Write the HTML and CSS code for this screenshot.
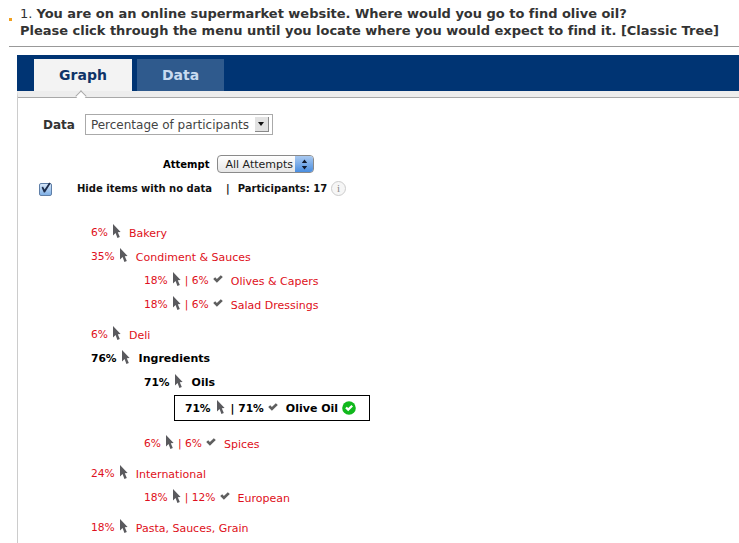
FILE: index.html
```html
<!DOCTYPE html>
<html>

<head>
    <title>Question results</title>
    <meta charset="UTF-8">
    <link rel="stylesheet" href="styles.css">
</head>

<body>
    <svg class="defs" width="0" height="0">
        <symbol id="cursor" viewBox="0 0 9 14">
            <path d="M1 0 L8.6 8 L5.8 8.2 L7.8 13 L5.4 14 L3.6 9 L1 11.4 Z" fill="#5a5a5e" />
        </symbol>
        <symbol id="tick" viewBox="0 0 10 8">
            <path d="M0.2 4 L2.2 2.2 L3.9 3.9 L7.8 0.2 L9.8 2 L3.9 7.8 Z" fill="#5f5f5f" />
        </symbol>
    </svg>

    <div class="question">
        <span class="marker"></span>
        <p>1. <b>You are on an online supermarket website. Where would you go to find olive oil?</b></p>
        <p><b>Please click through the menu until you locate where you would expect to find it. [Classic Tree]</b></p>
    </div>

    <div class="tabs">
        <div class="tab active">Graph</div>
        <div class="tab">Data</div>
    </div>

    <div class="panel">
        <span class="notch"></span>
        <div class="data-row">
            <label>Data</label>
            <div class="select">
                <span>Percentage of participants</span>
                <span class="select-arrow"></span>
            </div>
        </div>

        <div class="attempt-row">
            <label>Attempt</label>
            <div class="mac-select">
                <span>All Attempts</span>
                <span class="mac-arrows">
                    <svg width="7" height="11" viewBox="0 0 7 11">
                        <path d="M3.5 0.5 L6.2 4 L0.8 4 Z M3.5 10.5 L6.2 7 L0.8 7 Z" fill="#10192c" />
                    </svg>
                </span>
            </div>
        </div>

        <div class="filter-row">
            <span class="checkbox">
                <svg width="13" height="13" viewBox="0 0 13 13">
                    <path d="M2.6 5.6 L4 4.6 L5.6 7.4 L10.2 0.6 L11.6 1.4 L6 10.6 L4.8 10.6 Z" fill="#1d2c4a" />
                </svg>
            </span>
            <span class="hide-label">Hide items with no data</span>
            <span class="sep">|</span>
            <span>Participants: 17</span>
            <span class="info">i</span>
        </div>

        <ul class="tree">
            <li class="item lvl1 group"><span class="pct">6%</span><svg class="cur"><use href="#cursor" /></svg><span class="name">Bakery</span></li>
            <li class="item lvl1 group"><span class="pct">35%</span><svg class="cur"><use href="#cursor" /></svg><span class="name">Condiment &amp; Sauces</span></li>
            <li class="item lvl2"><span class="pct">18%</span><svg class="cur"><use href="#cursor" /></svg><span class="pct pipe">| 6%</span><svg class="tick"><use href="#tick" /></svg><span class="name">Olives &amp; Capers</span></li>
            <li class="item lvl2"><span class="pct">18%</span><svg class="cur"><use href="#cursor" /></svg><span class="pct pipe">| 6%</span><svg class="tick"><use href="#tick" /></svg><span class="name">Salad Dressings</span></li>
            <li class="item lvl1 group-gap"><span class="pct">6%</span><svg class="cur"><use href="#cursor" /></svg><span class="name">Deli</span></li>
            <li class="item lvl1 path"><span class="pct">76%</span><svg class="cur"><use href="#cursor" /></svg><span class="name">Ingredients</span></li>
            <li class="item lvl2 path"><span class="pct">71%</span><svg class="cur"><use href="#cursor" /></svg><span class="name">Oils</span></li>
            <li class="item correct path">
                <span class="pct">71%</span><svg class="cur"><use href="#cursor" /></svg><span class="pct pipe">| 71%</span><svg class="tick"><use href="#tick" /></svg><span class="name">Olive Oil</span>
                <svg class="ok" width="14" height="14" viewBox="0 0 14 14">
                    <circle cx="7" cy="7" r="6.8" fill="#10b81c" />
                    <path d="M3.2 7.2 L4.8 5.7 L6.2 7.1 L9.4 4 L11 5.5 L6.2 10.2 Z" fill="#fff" />
                </svg>
            </li>
            <li class="item lvl2 after-correct"><span class="pct">6%</span><svg class="cur"><use href="#cursor" /></svg><span class="pct pipe">| 6%</span><svg class="tick"><use href="#tick" /></svg><span class="name">Spices</span></li>
            <li class="item lvl1 group-gap"><span class="pct">24%</span><svg class="cur"><use href="#cursor" /></svg><span class="name">International</span></li>
            <li class="item lvl2"><span class="pct">18%</span><svg class="cur"><use href="#cursor" /></svg><span class="pct pipe">| 12%</span><svg class="tick"><use href="#tick" /></svg><span class="name">European</span></li>
            <li class="item lvl1 group-gap"><span class="pct">18%</span><svg class="cur"><use href="#cursor" /></svg><span class="name">Pasta, Sauces, Grain</span></li>
        </ul>
    </div>
</body>

</html>
```

FILE: styles.css
```css
html, body {
    height: 543px;
    overflow: hidden;
}

body {
    margin: 0;
    background: #fff;
    font-family: "DejaVu Sans", Verdana, sans-serif;
    color: #000;
    position: relative;
}

.defs {
    position: absolute;
}

.question {
    margin-left: 9px;
    height: 41px;
    padding: 5px 0 0 11px;
    border-bottom: 1px solid #999;
    position: relative;
    font-size: 13px;
    letter-spacing: -0.02px;
    line-height: 17px;
    color: #333;
    white-space: nowrap;
}

.question p {
    margin: 0;
}

.marker {
    position: absolute;
    left: 0;
    top: 18px;
    width: 3px;
    height: 3px;
    background: #f0a020;
}

.tabs {
    margin: 8px 0 0 17px;
    height: 36px;
    background: #003473;
    display: flex;
    align-items: flex-end;
    gap: 5px;
    padding-left: 17px;
}

.tab {
    width: 87px;
    height: 32px;
    line-height: 33px;
    text-align: center;
    font-size: 14px;
    font-weight: bold;
    color: #c9daf0;
    background: #2f5a8d;
}

.tab.active {
    width: 98px;
    color: #0f3468;
    background: #f3f3f3;
}

.panel {
    margin-left: 17px;
    border-top: 6px solid #ededed;
    border-left: 1px solid #ccc;
    height: 460px;
    position: relative;
    font-size: 11px;
}

.panel::before {
    content: "";
    position: absolute;
    left: 0;
    right: 0;
    top: 0;
    border-top: 1px solid #a8a8a8;
}

.notch {
    position: absolute;
    left: 59px;
    top: -5px;
    width: 7px;
    height: 7px;
    background: #fff;
    border-left: 1px solid #aaa;
    border-top: 1px solid #aaa;
    transform: rotate(45deg);
    z-index: 1;
}

.data-row {
    display: flex;
    align-items: center;
    gap: 10px;
    margin-left: 25px;
    padding-top: 17px;
    font-size: 13px;
}

.data-row label {
    font-weight: bold;
    font-size: 12px;
    color: #333;
}

.select {
    width: 188px;
    height: 21px;
    box-sizing: border-box;
    border: 1px solid #aaa;
    display: flex;
    align-items: center;
    justify-content: space-between;
    padding: 0 3px 0 5px;
    font-size: 12px;
    color: #444;
}

.select-arrow {
    width: 13px;
    height: 14px;
    background: #e2e2e2;
    border-right: 1px solid #888;
    border-bottom: 1px solid #888;
    position: relative;
}

.select-arrow::after {
    content: "";
    position: absolute;
    left: 3px;
    top: 5px;
    border: 3.5px solid transparent;
    border-top: 4px solid #111;
    border-bottom: 0;
}

.attempt-row {
    display: flex;
    align-items: center;
    gap: 8px;
    margin: 20px 0 0 145px;
    font-weight: bold;
    font-size: 10px;
}

.mac-select {
    width: 97px;
    height: 18px;
    box-sizing: border-box;
    border: 1px solid #8a8a8a;
    border-radius: 4px;
    background: linear-gradient(#fff, #e6e6e6);
    display: flex;
    align-items: center;
    justify-content: space-between;
    padding-left: 7px;
    font-weight: normal;
    font-size: 11px;
    color: #222;
    overflow: hidden;
}

.mac-arrows {
    width: 18px;
    height: 100%;
    display: flex;
    align-items: center;
    justify-content: center;
    background: linear-gradient(#a9c9f0, #4a8ee0);
}

.filter-row {
    display: flex;
    align-items: center;
    margin: 5px 0 0 21px;
    height: 20px;
    font-weight: bold;
    font-size: 10px;
    color: #111;
}

.checkbox {
    width: 11px;
    height: 11px;
    border: 1px solid #5f7fa8;
    border-radius: 2px;
    background: linear-gradient(#d6e6f8, #7fb0e6);
    margin-right: 25px;
    position: relative;
    top: 1px;
}

.checkbox svg {
    position: absolute;
    left: -1px;
    top: -2px;
}

.sep {
    margin: 0 8px 0 14px;
}

.info {
    width: 13px;
    height: 13px;
    margin-left: 4px;
    border: 1px solid #ccc;
    border-radius: 50%;
    background: #f6f6f6;
    color: #888;
    font-family: "Liberation Serif", serif;
    font-weight: normal;
    font-size: 11px;
    line-height: 13px;
    text-align: center;
}

.tree {
    list-style: none;
    margin: 22px 0 0;
    padding: 0;
}

.item {
    height: 24px;
    display: flex;
    align-items: center;
    color: #de1020;
    font-size: 11px;
}

.lvl1 {
    margin-left: 73px;
}

.lvl2 {
    margin-left: 126px;
}

.group-gap {
    margin-top: 6px;
}

.pct {
    font-size: 10.7px;
}

.pipe {
    margin-left: 4px;
}

.cur {
    width: 9px;
    height: 14px;
    margin-left: 4px;
    position: relative;
    top: -1px;
}

.tick {
    width: 10px;
    height: 8px;
    margin-left: 4px;
    position: relative;
    top: -1px;
}

.name {
    margin-left: 8px;
    font-size: 11px;
    position: relative;
    top: 1px;
}

.path {
    color: #000;
    font-weight: bold;
}

.path .name {
    margin-left: 9px;
    top: 0;
}

.correct {
    margin: 1px 0 0 156px;
    width: 196px;
    height: 26px;
    box-sizing: border-box;
    border: 1px solid #000;
    padding-left: 10px;
}

.correct .cur {
    margin-left: 5px;
}

.correct .pipe {
    margin-left: 6px;
}

.correct.path .name {
    margin-left: 8px;
}

.ok {
    margin-left: 4px;
}

.after-correct {
    margin-top: 10px;
}
```
